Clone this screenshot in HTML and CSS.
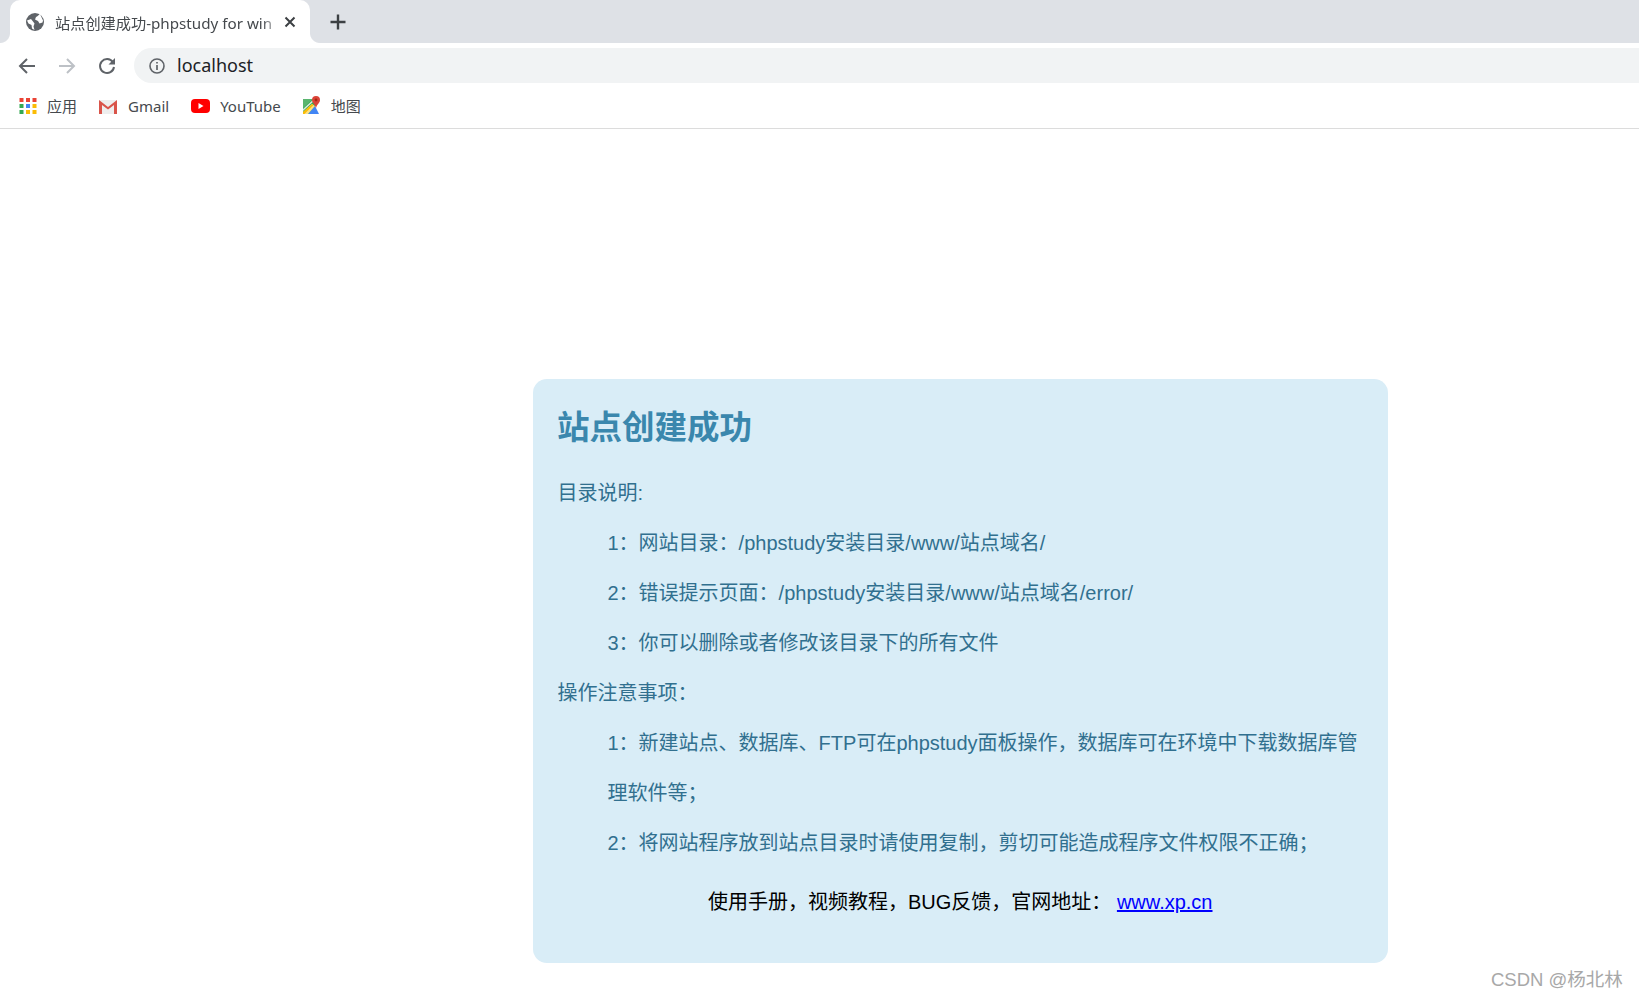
FILE: index.html
```html
<!DOCTYPE html>
<html lang="zh-CN">
<head>
  <meta charset="utf-8">
  <title>站点创建成功-phpstudy for windows</title>
  <link rel="stylesheet" href="styles.css">
</head>
<body>
  <div class="browser">
    <div class="tabstrip">
      <div class="tab">
        <svg class="tab__icon" viewBox="0 0 20 20" width="20" height="20">
          <circle cx="10" cy="10" r="9" fill="#5f6368"/>
          <path d="M2 8.500 6 7l2 2.500 1.500 2-1 3 1 3.500L7 16.500 6.500 13 3.500 11.500Z" fill="#fff"/>
          <path d="M12 4.500l3-2.500 3 6.500-.5 2-3 1-1.500-2.500-3-1.500 1-2.500Z" fill="#fff"/>
        </svg>
        <span class="tab__title">站点创建成功-phpstudy for win</span>
        <svg class="tab__close" viewBox="0 0 12 12" width="12" height="12">
          <path d="M1.500 1.500l9 9M10.500 1.500l-9 9" stroke="#3c4043" stroke-width="2" fill="none"/>
        </svg>
      </div>
      <svg class="newtab" viewBox="0 0 16 16" width="16" height="16">
        <path d="M8 .5v15M.5 8h15" stroke="#3c4043" stroke-width="2.400" fill="none"/>
      </svg>
    </div>

    <div class="toolbar">
      <svg class="nav" viewBox="0 0 18 18" width="18" height="18">
        <path d="M17 9H2.500M9 2 2 9l7 7" stroke="#5f6368" stroke-width="2" fill="none"/>
      </svg>
      <svg class="nav" viewBox="0 0 18 18" width="18" height="18">
        <path d="M1 9h14.500M9 2l7 7-7 7" stroke="#bdc1c6" stroke-width="2" fill="none"/>
      </svg>
      <svg class="nav" viewBox="0 0 18 18" width="18" height="18">
        <path d="M14.800 5A7 7 0 1 0 16 10" stroke="#5f6368" stroke-width="2" fill="none"/>
        <path d="M17 1v6.500h-6.500Z" fill="#5f6368"/>
      </svg>
      <div class="omnibox">
        <svg class="omnibox__icon" viewBox="0 0 16 16" width="16" height="16">
          <circle cx="8" cy="8" r="7" stroke="#5f6368" stroke-width="1.600" fill="none"/>
          <path d="M8 7v5M8 4v1.600" stroke="#5f6368" stroke-width="1.700" fill="none"/>
        </svg>
        <span class="omnibox__url">localhost</span>
      </div>
    </div>

    <div class="bookmarks">
      <div class="bookmark">
        <svg viewBox="0 0 18 18" width="18" height="18">
          <rect x="0.500" y="1" width="4" height="4" fill="#ea4335"/><rect x="7" y="1" width="4" height="4" fill="#ea4335"/><rect x="13.500" y="1" width="4" height="4" fill="#ea4335"/>
          <rect x="0.500" y="7" width="4" height="4" fill="#34a853"/><rect x="7" y="7" width="4" height="4" fill="#4285f4"/><rect x="13.500" y="7" width="4" height="4" fill="#fbbc05"/>
          <rect x="0.500" y="13" width="4" height="4" fill="#34a853"/><rect x="7" y="13" width="4" height="4" fill="#fbbc05"/><rect x="13.500" y="13" width="4" height="4" fill="#fbbc05"/>
        </svg>
        <span>应用</span>
      </div>
      <div class="bookmark">
        <svg viewBox="0 0 20 16" width="20" height="16">
          <path d="M1 2h18v14H1Z" fill="#eeeeee"/>
          <path d="M1 16V2l9 7 9-7v14h-3V7l-6 4.500L4 7v9Z" fill="#d9544a"/>
        </svg>
        <span>Gmail</span>
      </div>
      <div class="bookmark bookmark--yt">
        <svg viewBox="0 0 19 14" width="19" height="14">
          <rect width="19" height="14" rx="4" fill="#f00"/>
          <path d="M7.500 4l5 3-5 3Z" fill="#fff"/>
        </svg>
        <span>YouTube</span>
      </div>
      <div class="bookmark">
        <svg viewBox="0 0 19 19" width="19" height="19">
          <path d="M1 3h12v15H1Z" fill="#34a853"/>
          <path d="M6 18 13 10l4 8Z" fill="#4285f4"/>
          <path d="M1 18v-2L10 8l3 2-7 8Z" fill="#fbe08a"/>
          <path d="M1 16 10 8l1.500 1-9 9H1Z" fill="#fbbc05"/>
          <path d="M1 3h10L1 12Z" fill="#5ab56f"/>
          <path d="M1 13 12 3h1v1L1 15Z" fill="#dfe8df"/>
          <path d="M14 0a4 4 0 0 1 4 4c0 3-3 4-4 8-1-4-4-5-4-8a4 4 0 0 1 4-4Z" fill="#db4437"/>
          <circle cx="14" cy="4" r="1.400" fill="#a52714"/>
        </svg>
        <span>地图</span>
      </div>
    </div>
  </div>

  <div class="page">
    <div class="card">
      <h1 class="card__title">站点创建成功</h1>
      <p>目录说明:</p>
      <p class="indent">1：网站目录：/phpstudy安装目录/www/站点域名/</p>
      <p class="indent">2：错误提示页面：/phpstudy安装目录/www/站点域名/error/</p>
      <p class="indent">3：你可以删除或者修改该目录下的所有文件</p>
      <p>操作注意事项：</p>
      <p class="indent">1：新建站点、数据库、FTP可在phpstudy面板操作，数据库可在环境中下载数据库管理软件等；</p>
      <p class="indent">2：将网站程序放到站点目录时请使用复制，剪切可能造成程序文件权限不正确；</p>
      <p class="card__foot">使用手册，视频教程，BUG反馈，官网地址： <a href="#">www.xp.cn</a></p>
    </div>
  </div>

  <div class="watermark">CSDN @杨北林</div>
</body>
</html>
```

FILE: styles.css
```css
html, body {
  margin: 0;
  height: 100%;
}
body {
  position: relative;
  overflow: hidden;
  background: #fff;
  font-family: "Liberation Sans", "Noto Sans CJK SC", sans-serif;
}

/* browser chrome */
.browser {
  font-family: "Noto Sans", "Noto Sans CJK SC", sans-serif;
  border-bottom: 1px solid #dcdcdc;
}
.tabstrip {
  display: flex;
  align-items: center;
  height: 43px;
  padding-left: 10px;
  background: #dee1e6;
}
.tab {
  position: relative;
  display: flex;
  align-items: center;
  box-sizing: border-box;
  width: 300px;
  height: 43px;
  padding: 0 14px 0 15px;
  background: #fff;
  border-radius: 10px 10px 0 0;
}
.tab::before, .tab::after {
  content: "";
  position: absolute;
  bottom: 0;
  width: 10px;
  height: 10px;
}
.tab::before {
  left: -10px;
  background: radial-gradient(circle at 0 0, #dee1e6 9.500px, #fff 10.500px);
}
.tab::after {
  right: -10px;
  background: radial-gradient(circle at 100% 0, #dee1e6 9.500px, #fff 10.500px);
}
.tab__icon {
  flex: none;
  margin-right: 10px;
}
.tab__title {
  flex: 1;
  white-space: nowrap;
  font-size: 15.200px;
  color: #45494d;
  -webkit-mask-image: linear-gradient(to left, transparent 0, #000 20px);
}
.tab__close {
  flex: none;
  margin-left: 2px;
}
.newtab {
  margin-left: 20px;
}
.toolbar {
  display: flex;
  align-items: center;
  height: 45px;
  padding-left: 18px;
  background: #fff;
}
.nav {
  flex: none;
  margin-right: 22px;
}
.nav:nth-child(3) {
  margin-right: 18px;
}
.omnibox {
  flex: 1;
  display: flex;
  align-items: center;
  height: 35px;
  padding-left: 15px;
  background: #f1f3f4;
  border-radius: 18px 0 0 18px;
}
.omnibox__icon {
  margin-right: 12px;
}
.omnibox__url {
  padding-bottom: 2px;
  font-size: 18px;
  color: #202124;
}
.bookmarks {
  display: flex;
  align-items: center;
  height: 35px;
  padding: 0 0 5px 19px;
  background: #fff;
}
.bookmark {
  display: flex;
  align-items: center;
  gap: 10px;
  margin-right: 21px;
  font-size: 15px;
  color: #45494d;
}
.bookmark--yt {
  margin-left: 1px;
}

/* site card */
.page {
  padding: 250px 0 0 533px;
}
.card {
  box-sizing: border-box;
  width: 855px;
  height: 584px;
  padding: 27px 25px 0 24.500px;
  background: #d9edf7;
  border-radius: 14px;
  color: #31708f;
  font-size: 20px;
  line-height: 50px;
}
.card__title {
  margin: 0 0 17.500px -0.500px;
  font-size: 32.500px;
  line-height: 44px;
  font-weight: bold;
  color: #3a87ad;
}
.card p {
  margin: 0;
}
.card .indent {
  margin-left: 50px;
}
.card .card__foot {
  margin-top: 9px;
  text-align: center;
  color: #000;
}
.card__foot a {
  color: #00f;
}

.watermark {
  position: absolute;
  left: 1491px;
  top: 968px;
  font-size: 18.500px;
  line-height: 24px;
  color: #a8a8a8;
  white-space: nowrap;
}
```
